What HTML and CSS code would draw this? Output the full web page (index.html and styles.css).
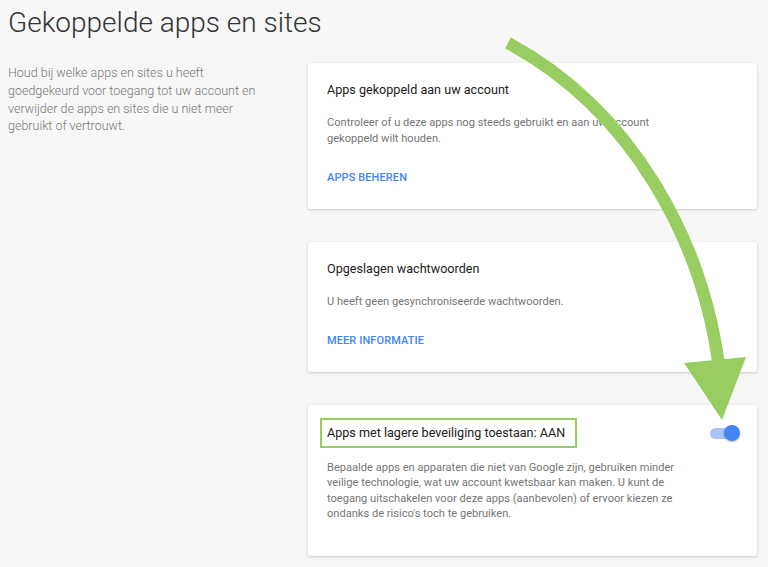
FILE: index.html
```html
<!DOCTYPE html>
<html lang="nl">
<head>
<meta charset="utf-8">
<title>Gekoppelde apps en sites</title>
<link rel="stylesheet" href="styles.css">
</head>
<body>
<div class="page">
  <h1 class="title">Gekoppelde apps en sites</h1>
  <div class="layout">
    <div class="intro-col">
      <p class="intro">Houd bij welke apps en sites u heeft goedgekeurd voor toegang tot uw account en verwijder de apps en sites die u niet meer gebruikt of vertrouwt.</p>
    </div>
    <div class="cards">
      <section class="card">
        <h2 class="card-title">Apps gekoppeld aan uw account</h2>
        <p class="card-text">Controleer of u deze apps nog steeds gebruikt en aan uw account gekoppeld wilt houden.</p>
        <a class="card-link" href="#">APPS BEHEREN</a>
      </section>
      <section class="card">
        <h2 class="card-title">Opgeslagen wachtwoorden</h2>
        <p class="card-text">U heeft geen gesynchroniseerde wachtwoorden.</p>
        <a class="card-link" href="#">MEER INFORMATIE</a>
      </section>
      <section class="card card-last">
        <div class="card-head">
          <h2 class="card-title"><span class="highlight">Apps met lagere beveiliging toestaan: AAN</span></h2>
          <div class="toggle"><span class="toggle-track"></span><span class="toggle-knob"></span></div>
        </div>
        <p class="card-text card-text-long">Bepaalde apps en apparaten die niet van Google zijn, gebruiken minder veilige technologie, wat uw account kwetsbaar kan maken. U kunt de toegang uitschakelen voor deze apps (aanbevolen) of ervoor kiezen ze ondanks de risico's toch te gebruiken.</p>
      </section>
    </div>
  </div>
  <svg class="arrow" width="768" height="567" viewBox="0 0 768 567" aria-hidden="true">
    <path d="M508 38 C634 106 703 238 719 362" fill="none" stroke="#98cd62" stroke-width="12.5"/>
    <polygon points="684,358 746,352 722,415" fill="#98cd62"/>
  </svg>
</div>
</body>
</html>
```
FILE: styles.css
```css
html, body {
  margin: 0;
  padding: 0;
}
body {
  background: #f7f7f7;
  font-family: Roboto, "Noto Sans", Arial, sans-serif;
  color: #222;
  width: 768px;
  height: 567px;
  overflow: hidden;
}
.page {
  position: relative;
  padding: 0 11px 0 8px;
}
.title {
  margin: 5px 0 0;
  font-size: 28px;
  line-height: 36px;
  font-weight: 300;
  color: #333;
}
.layout {
  display: flex;
  margin-top: 22px;
}
.intro-col {
  width: 300px;
  flex: none;
}
.intro {
  margin: 0;
  padding-top: 1px;
  max-width: 262px;
  font-size: 12.5px;
  line-height: 17.8px;
  font-weight: 300;
  color: #777;
}
.cards {
  flex: 1;
  display: flex;
  flex-direction: column;
  gap: 33px;
}
.card {
  background: #fff;
  border-radius: 2px;
  box-shadow: 0 1px 3px rgba(0, 0, 0, 0.18), 0 0 1px rgba(0, 0, 0, 0.08);
  padding: 17px 19px 23px;
  display: flex;
  flex-direction: column;
  align-items: flex-start;
}
.card-title {
  margin: 0;
  font-size: 12.6px;
  line-height: 20px;
  font-weight: 400;
  color: #212121;
}
.card-text {
  margin: 15px 0 0;
  max-width: 354px;
  font-size: 11.1px;
  line-height: 16px;
  color: #767676;
}
.card-link {
  margin-top: 23px;
  font-size: 11px;
  line-height: 16px;
  font-weight: 500;
  color: #4285f4;
  text-decoration: none;
  letter-spacing: 0.1px;
}
.card-last {
  padding-top: 13px;
  padding-bottom: 35px;
}
.card-head {
  align-self: stretch;
  display: flex;
  justify-content: space-between;
  align-items: center;
}
.highlight {
  display: inline-block;
  margin-left: -7px;
  padding: 3px 10px 3px 5px;
  border: 2px solid #98cd62;
}
.card-text-long {
  margin-top: 12px;
  line-height: 15.3px;
}
.toggle {
  position: relative;
  width: 30px;
  height: 16px;
  margin-right: -2px;
}
.toggle-track {
  position: absolute;
  left: 0;
  top: 2.5px;
  width: 28px;
  height: 11px;
  border-radius: 6px;
  background: #a6c4f8;
}
.toggle-knob {
  position: absolute;
  right: 0;
  top: 0;
  width: 16px;
  height: 16px;
  border-radius: 50%;
  background: #4285f4;
  box-shadow: 0 1px 2px rgba(0, 0, 0, 0.25);
}
.arrow {
  position: absolute;
  left: 0;
  top: 0;
  pointer-events: none;
}
```
